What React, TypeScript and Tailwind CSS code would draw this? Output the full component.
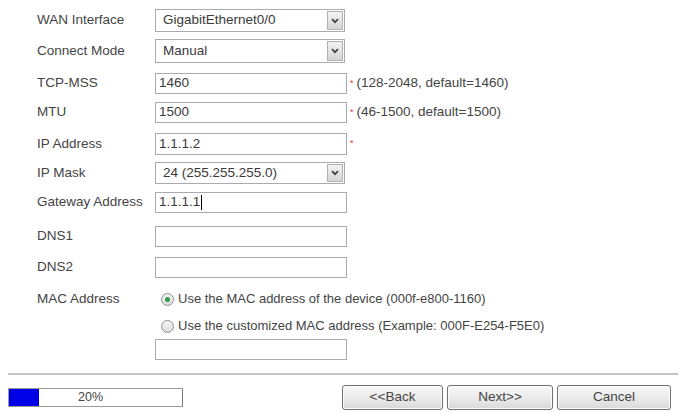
import type { ReactNode } from 'react'

const font = { fontFamily: '"Liberation Sans", Arial, sans-serif' }

function Label({ children }: { children: ReactNode }) {
  return <div className="w-[118px] shrink-0 text-[#444]">{children}</div>
}

function Select({ value }: { value: string }) {
  return (
    <div className="flex h-full w-[190px] items-stretch border border-[#a9abb0] bg-white p-px">
      <div className="flex flex-1 items-center pl-[6px] text-[#3a3a3a]">{value}</div>
      <div className="flex w-[16px] items-center justify-center border border-[#b0b0b0] bg-gradient-to-b from-[#f3f3f3] to-[#d4d4d4]">
        <svg width="8" height="6" viewBox="0 0 8 6">
          <path d="M1 1.2 L4 4.2 L7 1.2" fill="none" stroke="#444" strokeWidth="1.8" />
        </svg>
      </div>
    </div>
  )
}

function TextBox({ value, caret }: { value?: string; caret?: boolean }) {
  return (
    <div className="flex h-full w-[192px] items-center border border-[#a9abb0] bg-white pl-[3px] text-[#3a3a3a]">
      {value}
      {caret && <span className="ml-px inline-block h-[15px] w-px bg-black" />}
    </div>
  )
}

function Star() {
  return <span className="ml-[3px] self-start pt-[6px] text-[9px] leading-none text-[#e53a3a]">*</span>
}

function Radio({ checked }: { checked?: boolean }) {
  return (
    <span className="mr-[4px] flex h-[13px] w-[13px] items-center justify-center rounded-full border border-[#8e8f8f] bg-gradient-to-b from-[#f4f4f4] to-[#dcdcdc]">
      {checked && <span className="h-[5px] w-[5px] rounded-full bg-[#2f9e4c]" />}
    </span>
  )
}

function Button({ children }: { children: ReactNode }) {
  return (
    <button
      type="button"
      className="h-[25px] rounded-[3px] border border-[#707070] bg-gradient-to-b from-[#f8f8f8] via-[#ebebeb] to-[#d9d9d9] text-[#444] shadow-[inset_0_0_0_1px_#fcfcfc]"
    >
      {children}
    </button>
  )
}

export default function App() {
  return (
    <div className="h-[412px] w-[679px] overflow-hidden bg-white text-[13.5px]" style={font}>
      <div className="pl-[37px]">
        <div className="mt-[9px] flex h-[23px] items-center">
          <Label>WAN Interface</Label>
          <Select value="GigabitEthernet0/0" />
        </div>
        <div className="mt-[7px] flex h-[24px] items-center">
          <Label>Connect Mode</Label>
          <Select value="Manual" />
        </div>
        <div className="mt-[10px] flex h-[21px] items-center">
          <Label>TCP-MSS</Label>
          <TextBox value="1460" />
          <Star />
          <span className="ml-[3px] text-[#444]">(128-2048, default=1460)</span>
        </div>
        <div className="mt-[8px] flex h-[21px] items-center">
          <Label>MTU</Label>
          <TextBox value="1500" />
          <Star />
          <span className="ml-[3px] text-[#444]">(46-1500, default=1500)</span>
        </div>
        <div className="mt-[10px] flex h-[22px] items-center">
          <Label>IP Address</Label>
          <TextBox value="1.1.1.2" />
          <Star />
        </div>
        <div className="mt-[7px] flex h-[22px] items-center">
          <Label>IP Mask</Label>
          <Select value="24 (255.255.255.0)" />
        </div>
        <div className="mt-[8px] flex h-[21px] items-center">
          <Label>Gateway Address</Label>
          <TextBox value="1.1.1.1" caret />
        </div>
        <div className="mt-[13px] flex h-[21px] items-center">
          <Label>DNS1</Label>
          <TextBox />
        </div>
        <div className="mt-[10px] flex h-[21px] items-center">
          <Label>DNS2</Label>
          <TextBox />
        </div>
        <div className="mt-[13px] flex h-[16px] items-center">
          <Label>MAC Address</Label>
          <span className="ml-[6px] flex items-center text-[13px] text-[#444]">
            <Radio checked />
            Use the MAC address of the device (000f-e800-1160)
          </span>
        </div>
        <div className="mt-[11px] flex h-[16px] items-center pl-[124px] text-[13px] text-[#444]">
          <Radio />
          Use the customized MAC address (Example: 000F-E254-F5E0)
        </div>
        <div className="mt-[5px] flex h-[21px] items-center pl-[118px]">
          <TextBox />
        </div>
      </div>

      <div className="ml-[8px] mr-[1px] mt-[13px] h-[2px] bg-[#c6c6c6]" />

      <div className="mt-[10px] flex items-start pl-[8px]">
        <div className="relative mt-[3px] flex h-[19px] w-[175px] items-center justify-center border border-[#9a9a9a] border-r-[#7a7a7a] bg-white">
          <div className="absolute inset-y-0 left-0 w-[30px] bg-[#0000e6]" />
          <span className="relative -ml-[10px] text-[12.5px] text-[#444]">20%</span>
        </div>
        <div className="ml-[159px] grid grid-cols-[101px_106px_114px] gap-x-[4px]">
          <Button>&lt;&lt;Back</Button>
          <Button>Next&gt;&gt;</Button>
          <Button>Cancel</Button>
        </div>
      </div>
    </div>
  )
}
